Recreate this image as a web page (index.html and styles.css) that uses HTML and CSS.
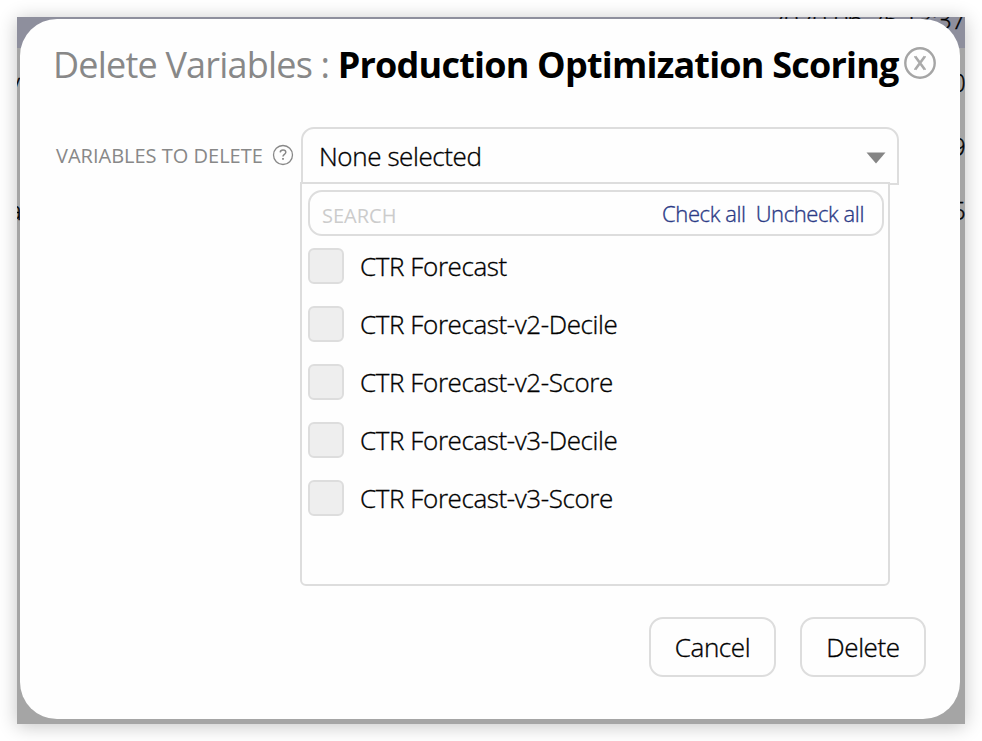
FILE: index.html
```html
<!DOCTYPE html>
<html lang="en">
<head>
<meta charset="utf-8">
<title>Delete Variables</title>
<link rel="stylesheet" href="styles.css">
</head>
<body>
<main class="window">
  <div class="backdrop">
    <div class="row header-row"><span></span><span>2020-06-25 13:37</span></div>
    <div class="row first"><span class="left">y</span><span>0</span></div>
    <div class="row"><span></span><span>9</span></div>
    <div class="row"><span class="left">a</span><span>5</span></div>
  </div>
  <section class="modal">
    <header class="title">
      <h1><span class="action">Delete Variables :</span> <span class="name">Production Optimization Scoring</span></h1>
      <button class="close" aria-label="Close">
        <svg width="34" height="34" viewBox="0 0 34 34" fill="none"><circle cx="17" cy="17" r="14.7" stroke="#a5a5a5" stroke-width="2.4"/><path d="M12.2 10.5 21.8 23.5M21.8 10.5 12.2 23.5" stroke="#aaa" stroke-width="2.6"/><path d="M11 10.5h3M20 10.5h3M11 23.5h3M20 23.5h3" stroke="#bbb" stroke-width="1"/></svg>
      </button>
    </header>
    <div class="field">
      <div class="label"><span class="label-text">VARIABLES TO DELETE</span>
        <svg width="22" height="22" viewBox="0 0 22 22" fill="none" stroke="#888"><circle cx="11" cy="11" r="9.5" stroke-width="1.3"/><path d="M8.2 8.3C8.4 6.8 9.5 6.1 11 6.1c1.7 0 2.8.8 2.8 2.2 0 2-2.8 2-2.8 4.2" stroke-width="1.5"/><path d="M11 14v1.8" stroke-width="1.8"/></svg>
      </div>
      <div class="select">
        <span class="value">None selected</span>
        <svg class="caret" width="20" height="12" viewBox="0 0 20 12"><path d="M.5 .5h19L10 11.5z" fill="#858585"/></svg>
        <div class="menu">
          <div class="search"><span class="placeholder">SEARCH</span><a class="check">Check all</a><a class="uncheck">Uncheck all</a></div>
          <div class="options">
            <div class="option"><i class="box"></i><span>CTR Forecast</span></div>
            <div class="option"><i class="box"></i><span>CTR Forecast-v2-Decile</span></div>
            <div class="option"><i class="box"></i><span>CTR Forecast-v2-Score</span></div>
            <div class="option"><i class="box"></i><span>CTR Forecast-v3-Decile</span></div>
            <div class="option"><i class="box"></i><span>CTR Forecast-v3-Score</span></div>
          </div>
        </div>
      </div>
    </div>
    <footer class="actions"><button class="btn cancel">Cancel</button><button class="btn">Delete</button></footer>
  </section>
</main>
</body>
</html>
```

FILE: styles.css
```css
* { box-sizing: border-box; }
body { margin: 0; height: 741px; padding: 17px; overflow: hidden; background: #fff; color: #000; font-family: "Open Sans", sans-serif; }
button { font: inherit; color: inherit; letter-spacing: inherit; background: none; border: 0; padding: 0; }
.window { position: relative; width: 948px; height: 707px; padding: 2px 5px 5px 3px; background: #a5a5a5; box-shadow: 0 2px 18px rgba(0,0,0,.24); }
.backdrop { position: absolute; inset: 0; overflow: hidden; font-size: 26px; font-weight: 300; letter-spacing: -.8px; -webkit-text-stroke: .35px currentColor; }
.row { height: 64px; display: flex; justify-content: space-between; align-items: center; line-height: 36px; }
.header-row { height: 31px; background: #8e8f9d; align-items: flex-start; }
.header-row span { margin-top: -16px; }
.first { margin-top: 2px; }
.left { margin-left: -9px; }
.modal { position: relative; width: 940px; height: 700px; padding: 28px 24px 42px 33px; border-radius: 37px; background: #fefefe; display: flex; flex-direction: column; }
.title { display: flex; align-items: flex-start; height: 80px; }
h1 { width: 850px; flex: none; margin: 0; font-size: 36px; line-height: 36px; font-weight: 400; letter-spacing: -.8px; white-space: nowrap; }
.action { color: #888; }
.name { font-weight: 700; }
.close { width: 34px; height: 34px; margin-top: -1px; }
.close svg, .caret { display: block; }
.caret { margin-right: -1px; margin-top: 3px; }
.field { display: flex; }
.label { width: 248px; height: 56px; padding-left: 3px; display: flex; align-items: center; gap: 9px; color: #888; font-size: 20px; white-space: nowrap; }
.select { position: relative; width: 598px; height: 58px; border: 2px solid #ddd; border-radius: 13px 13px 0 0; padding: 0 12px 0 16px; display: flex; justify-content: space-between; align-items: center; font-size: 26px; font-weight: 300; letter-spacing: -.4px; -webkit-text-stroke: .35px currentColor; }
.menu { position: absolute; left: -3px; top: 53px; width: 590px; height: 404px; padding: 6px 4px 0 6px; border: 2px solid #ddd; border-radius: 0 0 6px 6px; background: #fefefe; }
.search { height: 46px; border: 2px solid #ddd; border-radius: 14px; display: flex; align-items: center; padding: 0 18px 0 12px; font-size: 22px; color: #2b3a86; }
.placeholder { flex: 1; color: #ccc; font-size: 20px; font-weight: 400; letter-spacing: 0; -webkit-text-stroke: 0; padding-top: 4px; }
.uncheck { margin-left: 10px; }
.options { padding-top: 12px; display: flex; flex-direction: column; gap: 22px; }
.option { height: 36px; display: flex; align-items: center; gap: 16px; }
.box { width: 36px; height: 36px; border: 2px solid #ddd; border-radius: 6px; background: #eee; }
.actions { margin-top: auto; margin-right: 10px; display: flex; justify-content: flex-end; gap: 24px; font-size: 26px; font-weight: 300; letter-spacing: -.4px; -webkit-text-stroke: .35px currentColor; }
.btn { width: 126px; height: 60px; border: 2px solid #ddd; border-radius: 14px; }
.cancel { width: 127px; }
```
